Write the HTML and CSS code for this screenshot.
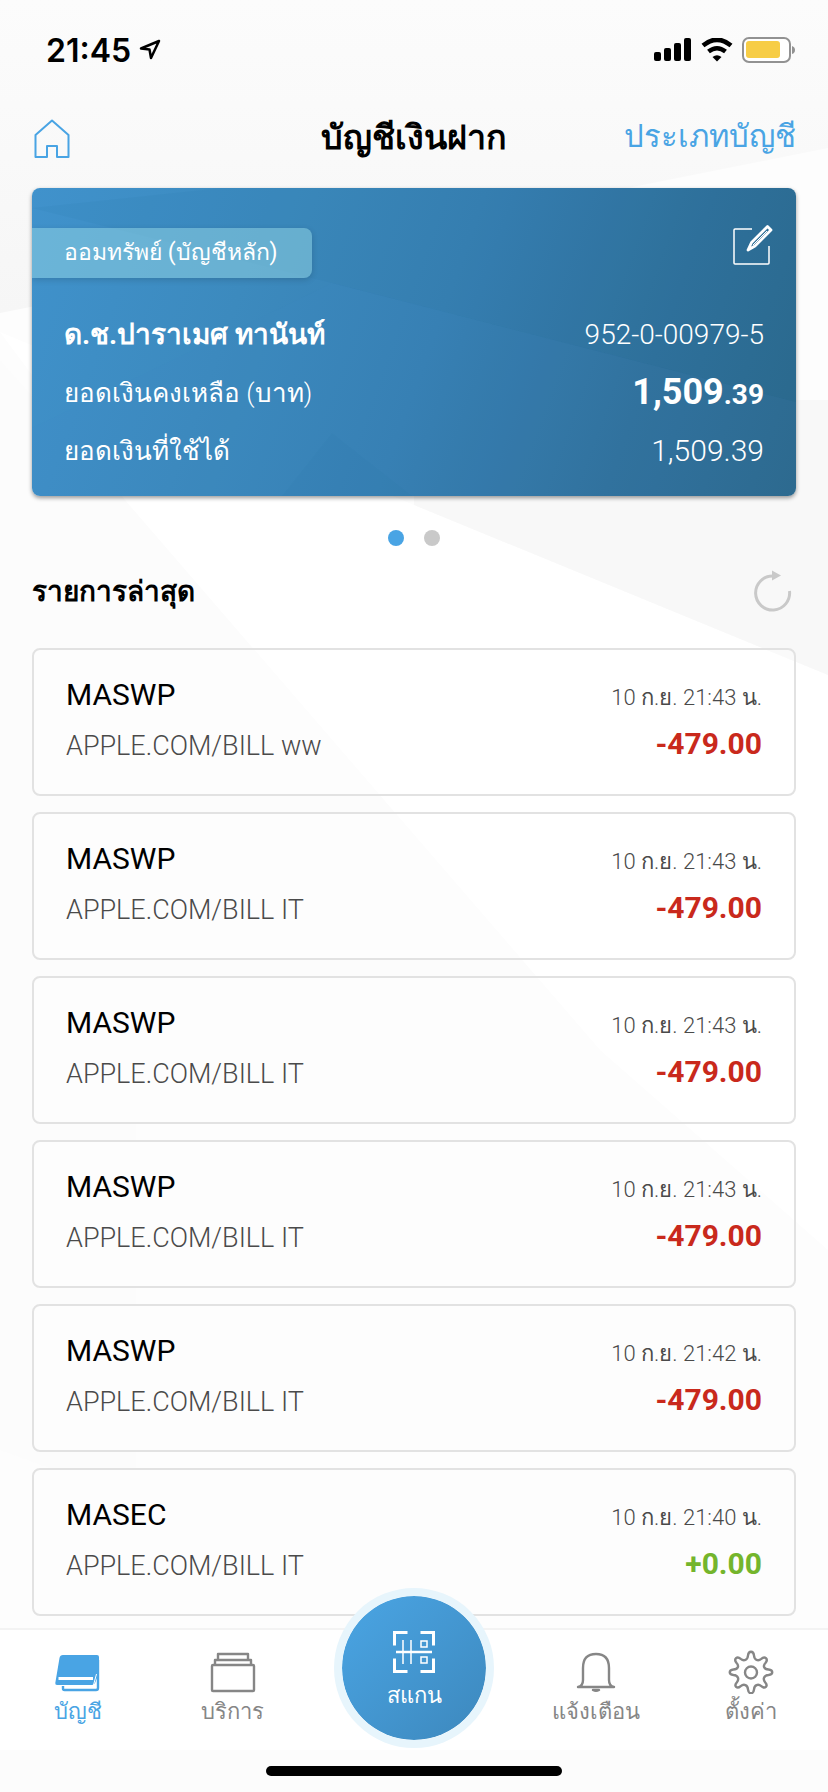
FILE: index.html
```html
<!DOCTYPE html>
<html lang="th">
<head>
    <meta charset="UTF-8">
    <meta name="viewport" content="width=device-width, initial-scale=1.0">
    <title>บัญชีเงินฝาก</title>
    <link rel="stylesheet" href="styles.css">
</head>
<body>
    <svg class="backdrop" viewBox="0 0 828 1792" preserveAspectRatio="none" aria-hidden="true">
        <defs>
            <linearGradient id="shade" x1="0" y1="0" x2="0" y2="1">
                <stop offset="0" stop-color="#fcfcfc"/>
                <stop offset="1" stop-color="#f6f6f6"/>
            </linearGradient>
        </defs>
        <path d="M0 0H828V148L0 313Z" fill="url(#shade)"/>
        <path d="M0 332L125 500L250 650L600 1050L828 1250V675L414 505Z" fill="#fff"/>
        <path d="M828 400V675L414 505V400Z" fill="#f8f8f8"/>
        <path d="M0 360L125 500L600 1050L136 1000V1500L0 1450Z" fill="#fcfcfc"/>
    </svg>

    <div class="status-bar">
        <div class="status-time">
            <span>21:45</span>
            <svg width="22" height="22" viewBox="0 0 22 22"><path d="M20 2L2 9.5L10.500 10.500L12 19Z" fill="none" stroke="#000" stroke-width="2.500" stroke-linejoin="round"/></svg>
        </div>
        <div class="status-icons">
            <svg width="38" height="24" viewBox="0 0 38 24"><rect x="0" y="14" width="7" height="9" rx="2"/><rect x="10" y="10" width="7" height="13" rx="2"/><rect x="20" y="5" width="7" height="18" rx="2"/><rect x="30" y="0" width="7" height="23" rx="2"/></svg>
            <svg width="32" height="24" viewBox="0 0 32 24"><path d="M2 7.500Q16 -4 30 7.500M7.500 13.500Q16 7 24.500 13.500" fill="none" stroke="#000" stroke-width="4.600"/><path d="M11.500 19Q16 15.500 20.500 19L16 23.500Z"/></svg>
            <svg width="54" height="26" viewBox="0 0 54 26"><rect x="1" y="1" width="47" height="24" rx="6" fill="#fff" stroke="#929292" stroke-width="2"/><rect x="4" y="4" width="34" height="17" rx="3" fill="#f7cd46"/><path d="M50 9Q53 10 53 13T50 17Z" fill="#929292"/></svg>
        </div>
    </div>

    <header class="header">
        <a class="home" href="#" aria-label="หน้าหลัก">
            <svg width="36" height="40" viewBox="0 0 36 40"><path d="M18 1.500L34.500 16V38H23V27H13V38H1.500V16Z" fill="none" stroke="#49a4e4" stroke-width="2" stroke-linejoin="round"/></svg>
        </a>
        <h1>บัญชีเงินฝาก</h1>
        <a class="account-type" href="#">ประเภทบัญชี</a>
    </header>

    <main class="content">
        <section class="account">
            <svg class="facets" viewBox="0 0 764 308" preserveAspectRatio="none" aria-hidden="true">
                <path d="M0 20L190 0H764V214L300 95Z" fill="#0f5c80" opacity=".05"/>
                <path d="M0 308V240L300 95L764 214V308Z" fill="#3c8fd0" opacity=".06"/>
                <path d="M300 245L380 308H250Z" fill="#0f5c80" opacity=".03"/>
            </svg>
            <div class="account-top">
                <span class="tag">ออมทรัพย์ (บัญชีหลัก)</span>
                <button class="edit" type="button" aria-label="แก้ไข">
                    <svg width="42" height="42" viewBox="0 0 42 42" fill="none" stroke="#fff" stroke-linejoin="round"><path d="M20 5H3Q2 5 2 6V39Q2 40 3 40H36Q37 40 37 39V22" stroke-width="1.500"/><path d="M35.500 2.500L39 6L23 22L16 26L19.500 18.500Z" stroke-width="2.800"/><path d="M35 7L21 21" stroke-width="1"/></svg>
                </button>
            </div>
            <dl class="account-rows">
                <div class="row">
                    <dt class="owner">ด.ช.ปาราเมศ ทานันท์</dt>
                    <dd class="number">952-0-00979-5</dd>
                </div>
                <div class="row">
                    <dt>ยอดเงินคงเหลือ (บาท)</dt>
                    <dd class="balance">1,509<small>.39</small></dd>
                </div>
                <div class="row">
                    <dt>ยอดเงินที่ใช้ได้</dt>
                    <dd class="available">1,509.39</dd>
                </div>
            </dl>
        </section>

        <div class="dots">
            <button class="dot active" type="button" aria-label="1"></button>
            <button class="dot" type="button" aria-label="2"></button>
        </div>

        <div class="section-head">
            <h2>รายการล่าสุด</h2>
            <button class="refresh" type="button" aria-label="รีเฟรช">
                <svg width="40" height="42" viewBox="0 0 40 42"><path d="M20 6A17 17 0 1 0 36.500 21" fill="none" stroke="#c9c9c9" stroke-width="3"/><path d="M19 0.500L28 5.500L19 10.500Z" fill="#c9c9c9"/></svg>
            </button>
        </div>

        <ul class="transactions">
            <li class="transaction">
                <div>
                    <p class="name">MASWP</p>
                    <p class="detail">APPLE.COM/BILL ww</p>
                </div>
                <div class="right">
                    <p class="date">10 ก.ย. 21:43 น.</p>
                    <p class="amount">-479.00</p>
                </div>
            </li>
            <li class="transaction">
                <div>
                    <p class="name">MASWP</p>
                    <p class="detail">APPLE.COM/BILL IT</p>
                </div>
                <div class="right">
                    <p class="date">10 ก.ย. 21:43 น.</p>
                    <p class="amount">-479.00</p>
                </div>
            </li>
            <li class="transaction">
                <div>
                    <p class="name">MASWP</p>
                    <p class="detail">APPLE.COM/BILL IT</p>
                </div>
                <div class="right">
                    <p class="date">10 ก.ย. 21:43 น.</p>
                    <p class="amount">-479.00</p>
                </div>
            </li>
            <li class="transaction">
                <div>
                    <p class="name">MASWP</p>
                    <p class="detail">APPLE.COM/BILL IT</p>
                </div>
                <div class="right">
                    <p class="date">10 ก.ย. 21:43 น.</p>
                    <p class="amount">-479.00</p>
                </div>
            </li>
            <li class="transaction">
                <div>
                    <p class="name">MASWP</p>
                    <p class="detail">APPLE.COM/BILL IT</p>
                </div>
                <div class="right">
                    <p class="date">10 ก.ย. 21:42 น.</p>
                    <p class="amount">-479.00</p>
                </div>
            </li>
            <li class="transaction">
                <div>
                    <p class="name">MASEC</p>
                    <p class="detail">APPLE.COM/BILL IT</p>
                </div>
                <div class="right">
                    <p class="date">10 ก.ย. 21:40 น.</p>
                    <p class="amount income">+0.00</p>
                </div>
            </li>
        </ul>
    </main>

    <footer class="bottom">
        <nav class="tabs">
            <a class="tab active" href="#">
                <svg width="46" height="46" viewBox="0 0 46 46"><path d="M8 38V40.500Q8 42 9.500 42H41Q43 42 43 40V12" fill="none" stroke="#49a4e4" stroke-width="2.400"/><path d="M8 7H42Q44 7 44 9V25L40 35Q39 37 37 37H2Q0 37 0.300 35L4.500 10Q5 7 8 7Z" fill="#49a4e4"/><path d="M3.500 30.500H38" stroke="#fff" stroke-width="3"/><path d="M41.500 26L38.500 37" stroke="#fff" stroke-width="1"/></svg>
                <span>บัญชี</span>
            </a>
            <a class="tab" href="#">
                <svg width="46" height="46" viewBox="0 0 46 46" fill="none" stroke="#868686" stroke-width="2.400" stroke-linejoin="round"><rect x="2" y="17" width="42" height="26" rx="1"/><path d="M5 17V12H41V17M8 12V6H38V12"/></svg>
                <span>บริการ</span>
            </a>
            <a class="scan" href="#">
                <svg width="44" height="44" viewBox="0 0 44 44" fill="none" stroke="#fff"><path d="M2.500 15.500V2.500H15.500M28.500 2.500H41.500V15.500M41.500 28.500V41.500H28.500M15.500 41.500H2.500V28.500" stroke-width="3"/><path d="M4 22H40" stroke-width="2.600"/><path d="M11 10V34M19 10V34" stroke-width="1.500"/><rect x="29" y="11" width="6" height="6" stroke-width="1.500"/><rect x="29" y="27" width="6" height="6" stroke-width="1.500"/></svg>
                <span>สแกน</span>
            </a>
            <a class="tab" href="#">
                <svg width="46" height="46" viewBox="0 0 46 46" fill="none" stroke="#868686" stroke-width="2.400" stroke-linecap="round" stroke-linejoin="round"><path d="M5 39Q10 38 10 32V20Q10 6 23 6T36 20V32Q36 38 41 39Z"/><path d="M20 42Q23 43.500 26 42Z"/></svg>
                <span>แจ้งเตือน</span>
            </a>
            <a class="tab" href="#">
                <svg width="46" height="46" viewBox="0 0 46 46" fill="none" stroke="#868686" stroke-width="2.400" stroke-linejoin="round"><path d="M20 7.500C20.500 2.500 25.500 2.500 26 7.500C26.300 12 30 13.500 33.300 10.900C37 7.500 40.500 11 37.600 14.700C34.500 18 36 21.500 40.500 21.500C45.500 22 45.500 26.500 40.500 27C36 27.300 34.500 31 37.100 34.300C40.500 38 37 41.500 33.300 38.100C30 35.500 26.300 37 26 41.500C25.500 46.500 20.500 46.500 20 41.500C19.700 37 16 35.500 12.700 38.100C9 41.500 5.500 38 8.900 34.300C11.500 31 10 27.300 5.500 27C0.500 26.500 0.500 22 5.500 21.500C10 21.500 11.500 18 8.400 14.700C5.500 11 9 7.500 12.700 10.900C16 13.500 19.700 12 20 7.500Z"/><circle cx="23" cy="24.500" r="6"/></svg>
                <span>ตั้งค่า</span>
            </a>
        </nav>
        <div class="home-indicator"></div>
    </footer>
</body>
</html>
```
FILE: styles.css
```css
* {
    box-sizing: border-box;
}
body {
    position: relative;
    min-height: 100vh;
    margin: 0;
    display: flex;
    flex-direction: column;
    font-family: Roboto, "Noto Sans", sans-serif;
    color: #000;
    background-color: #fdfdfd;
}
h1, h2, p, ul, dl, dd {
    margin: 0;
    padding: 0;
}
a {
    color: inherit;
    text-decoration: none;
}
button {
    padding: 0;
    border: none;
    background: none;
    cursor: pointer;
}
svg {
    display: block;
}
.backdrop {
    position: absolute;
    top: 0;
    left: 0;
    width: 100%;
    height: 100%;
    z-index: -1;
}

/* status bar */
.status-bar {
    display: flex;
    justify-content: space-between;
    align-items: center;
    height: 100px;
    padding: 0 32px 0 46px;
}
.status-time {
    display: flex;
    align-items: center;
    gap: 8px;
    font-family: Inter, sans-serif;
    font-size: 32px;
    font-weight: 600;
}
.status-icons {
    display: flex;
    align-items: center;
    gap: 9px;
}

/* header */
.header {
    display: grid;
    grid-template-columns: 1fr auto 1fr;
    align-items: center;
    height: 88px;
    padding: 0 32px 14px;
}
.home {
    justify-self: start;
    padding: 4px 2px 0;
}
.header h1 {
    font-size: 34px;
    line-height: 48px;
    font-weight: 700;
}
.account-type {
    justify-self: end;
    font-size: 31px;
    line-height: 48px;
    color: #49a4e4;
}

/* account card */
.content {
    padding: 0 32px 12px;
}
.account {
    position: relative;
    height: 308px;
    overflow: hidden;
    border-radius: 8px;
    color: #fff;
    background: linear-gradient(110deg, #4092cc 0%, #3c8abe 28%, #3780b3 52%, #30719c 78%, #2c698c 100%);
    box-shadow: 0 2px 4px rgba(0, 0, 0, 0.4);
}
.facets {
    position: absolute;
    top: 0;
    left: 0;
    width: 100%;
    height: 100%;
}
.account-top {
    position: relative;
    display: flex;
    justify-content: space-between;
    align-items: flex-end;
    height: 90px;
    padding-right: 22px;
}
.tag {
    height: 50px;
    padding: 0 34px 0 32px;
    border-radius: 0 8px 8px 0;
    font-size: 23px;
    line-height: 50px;
    background-color: rgba(150, 215, 230, 0.5);
    box-shadow: 0 2px 6px rgba(0, 0, 0, 0.15);
}
.edit {
    height: 54px;
}
.edit svg {
    margin-bottom: 12px;
}
.account-rows {
    position: relative;
    padding: 27px 32px 0;
}
.row {
    display: flex;
    justify-content: space-between;
    align-items: center;
    height: 58px;
    font-size: 26px;
    font-weight: 300;
}
.owner {
    font-size: 28px;
    font-weight: 700;
}
.number {
    font-size: 28px;
}
.balance {
    font-size: 36px;
    font-weight: 700;
}
.balance small {
    font-size: 28px;
}
.available {
    font-size: 30px;
}

/* card pager */
.dots {
    display: flex;
    justify-content: center;
    gap: 20px;
    padding: 34px 0 18px;
}
.dot {
    width: 16px;
    height: 16px;
    border-radius: 50%;
    background-color: #c9c9c9;
}
.dot.active {
    background-color: #49a4e4;
}

/* latest transactions */
.section-head {
    display: flex;
    justify-content: space-between;
    align-items: center;
    height: 84px;
    padding: 0 3px 30px 0;
}
.section-head h2 {
    font-size: 28px;
    font-weight: 700;
}
.transactions {
    display: flex;
    flex-direction: column;
    gap: 16px;
    list-style: none;
}
.transaction {
    display: flex;
    justify-content: space-between;
    height: 148px;
    padding: 24px 32px;
    border: 2px solid #e2e2e2;
    border-radius: 8px;
    background-color: rgba(255, 255, 255, 0.3);
}
.name {
    font-size: 30px;
    line-height: 42px;
}
.detail {
    padding-top: 8px;
    font-size: 27px;
    line-height: 44px;
    font-weight: 300;
    color: #4a4a4a;
}
.right {
    text-align: right;
}
.date {
    font-size: 22px;
    line-height: 48px;
    font-weight: 300;
    color: #4a4a4a;
}
.amount {
    font-size: 30px;
    line-height: 44px;
    font-weight: 700;
    color: #c9291c;
}
.amount.income {
    color: #74b52c;
}

/* bottom tabs */
.bottom {
    position: sticky;
    bottom: 0;
    margin-top: auto;
    background-color: #fcfcfc;
}
.tabs {
    display: grid;
    grid-template-columns: 1fr 1fr 208px 1fr 1fr;
    height: 122px;
    border-top: 2px solid #f3f3f3;
    background-color: #fff;
}
.tab {
    display: flex;
    flex-direction: column;
    align-items: center;
    padding-top: 18px;
    font-size: 22px;
    line-height: 36px;
    color: #868686;
}
.tab.active {
    color: #49a4e4;
}
.scan {
    display: flex;
    flex-direction: column;
    align-items: center;
    justify-self: center;
    width: 160px;
    height: 160px;
    margin-top: -42px;
    padding-top: 34px;
    border: 8px solid #e7f5fc;
    border-radius: 50%;
    font-size: 22px;
    line-height: 44px;
    color: #fff;
    background: linear-gradient(135deg, #4aa5e4, #3d88bd) padding-box;
}
.home-indicator {
    width: 296px;
    height: 10px;
    margin: 16px auto;
    border-radius: 5px;
    background-color: #000;
}
```
